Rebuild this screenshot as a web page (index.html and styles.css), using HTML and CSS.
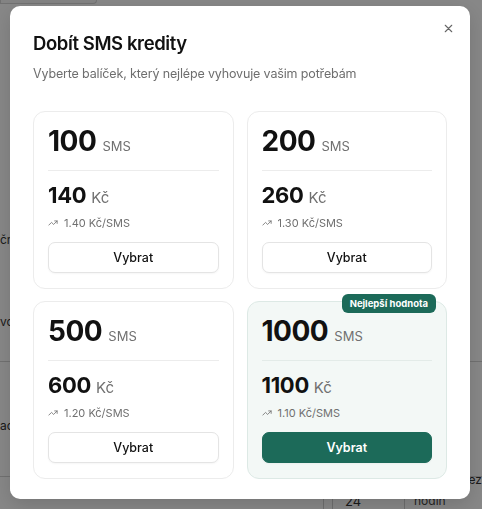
FILE: index.html
```html
<!DOCTYPE html>
<html lang="cs">
<head>
    <meta charset="UTF-8">
    <meta name="viewport" content="width=device-width, initial-scale=1.0">
    <title>Dobít SMS kredity</title>
    <link rel="stylesheet" href="styles.css">
</head>
<body>
    <!-- page behind the dialog -->
    <div class="page">
        <div class="page-top"></div>
        <div class="frag f1">čr</div>
        <div class="frag f2">vc</div>
        <div class="band">
            <div class="frag">ac</div>
            <div class="frag side">ez</div>
        </div>
        <div class="page-table">
            <div class="cell c1"></div>
            <div class="cell c2">24</div>
            <div class="cell c3">hodin</div>
        </div>
    </div>

    <div class="backdrop">
        <div class="modal">
            <button class="close" aria-label="Zavřít">
                <svg viewBox="0 0 24 24" width="13" height="13" fill="none" stroke="currentColor" stroke-width="2" stroke-linecap="round"><path d="M18 6 6 18M6 6l12 12"/></svg>
            </button>
            <h2 class="title">Dobít SMS kredity</h2>
            <p class="subtitle">Vyberte balíček, který nejlépe vyhovuje vašim potřebám</p>

            <div class="packages">
                <div class="pack">
                    <div class="amount">100 <span>SMS</span></div>
                    <div class="price">140 <span>Kč</span></div>
                    <div class="rate">
                        <svg viewBox="0 0 24 24" width="10" height="10" fill="none" stroke="currentColor" stroke-width="2" stroke-linecap="round" stroke-linejoin="round"><polyline points="22 7 13.5 15.5 8.5 10.5 2 17"/><polyline points="16 7 22 7 22 13"/></svg>
                        1.40 Kč/SMS
                    </div>
                    <button class="pick">Vybrat</button>
                </div>
                <div class="pack">
                    <div class="amount">200 <span>SMS</span></div>
                    <div class="price">260 <span>Kč</span></div>
                    <div class="rate">
                        <svg viewBox="0 0 24 24" width="10" height="10" fill="none" stroke="currentColor" stroke-width="2" stroke-linecap="round" stroke-linejoin="round"><polyline points="22 7 13.5 15.5 8.5 10.5 2 17"/><polyline points="16 7 22 7 22 13"/></svg>
                        1.30 Kč/SMS
                    </div>
                    <button class="pick">Vybrat</button>
                </div>
                <div class="pack">
                    <div class="amount">500 <span>SMS</span></div>
                    <div class="price">600 <span>Kč</span></div>
                    <div class="rate">
                        <svg viewBox="0 0 24 24" width="10" height="10" fill="none" stroke="currentColor" stroke-width="2" stroke-linecap="round" stroke-linejoin="round"><polyline points="22 7 13.5 15.5 8.5 10.5 2 17"/><polyline points="16 7 22 7 22 13"/></svg>
                        1.20 Kč/SMS
                    </div>
                    <button class="pick">Vybrat</button>
                </div>
                <div class="pack best">
                    <div class="badge">Nejlepší hodnota</div>
                    <div class="amount">1000 <span>SMS</span></div>
                    <div class="price">1100 <span>Kč</span></div>
                    <div class="rate">
                        <svg viewBox="0 0 24 24" width="10" height="10" fill="none" stroke="currentColor" stroke-width="2" stroke-linecap="round" stroke-linejoin="round"><polyline points="22 7 13.5 15.5 8.5 10.5 2 17"/><polyline points="16 7 22 7 22 13"/></svg>
                        1.10 Kč/SMS
                    </div>
                    <button class="pick primary">Vybrat</button>
                </div>
            </div>
        </div>
    </div>
</body>
</html>
```

FILE: styles.css
```css
*{
    margin: 0;
    padding: 0;
    box-sizing: border-box;
}

body{
    width: 482px;
    height: 509px;
    overflow: hidden;
    background: #fff;
    font-family: Inter, "Noto Sans", sans-serif;
    color: #111;
}

/* page behind the dialog */
.page{
    height: 100%;
    overflow: hidden;
}

.page-top{
    width: 97px;
    height: 4px;
    border: 1px solid #d6d6d6;
    border-top: none;
    border-radius: 0 0 4px 0;
    background: #f7f7f7;
}

.frag{
    font-size: 12px;
    line-height: 14px;
    color: #333;
}

.f1{ margin-top: 229px; }
.f2{ margin-top: 68px; }

.band{
    margin-top: 32px;
    height: 116px;
    border-top: 1px solid #d4d4d4;
    border-bottom: 1px solid #d4d4d4;
    display: flex;
    justify-content: space-between;
    padding-top: 57px;
}

.band .side{
    padding-top: 54px;
}

.page-table{
    display: flex;
    margin-left: 323px;
    color: #444;
}

.cell{ height: 32px; }
.c1{ width: 10px; border-left: 1px solid #cfcfcf; border-right: 1px solid #cfcfcf; }
.c2{ width: 71px; padding: 18px 0 0 12px; font-size: 13px; line-height: 12px; color: #333; }
.c3{ border-left: 1px solid #cfcfcf; padding: 18px 0 0 9px; font-size: 12px; line-height: 12px; }

/* dialog */
.backdrop{
    position: fixed;
    inset: 0;
    background: rgba(0, 0, 0, 0.47);
    display: flex;
    align-items: flex-start;
    padding: 6px 0 0 10px;
}

.modal{
    position: relative;
    width: 460px;
    height: 493px;
    background: #fff;
    border-radius: 10px;
    padding: 25px 23px 0;
    box-shadow: 0 6px 20px rgba(0, 0, 0, 0.15);
}

.close{
    position: absolute;
    top: 12px;
    right: 12px;
    width: 20px;
    height: 20px;
    border: none;
    background: transparent;
    color: #666;
    display: flex;
    align-items: center;
    justify-content: center;
}

.title{
    font-size: 18.5px;
    font-weight: 600;
    line-height: 24px;
    letter-spacing: -0.4px;
}

.subtitle{
    margin-top: 11px;
    font-size: 12.5px;
    line-height: 16px;
    letter-spacing: -0.15px;
    color: #6e6e6e;
}

.packages{
    margin-top: 29px;
    display: grid;
    grid-template-columns: 1fr 1fr;
    gap: 12px 13px;
}

.pack{
    position: relative;
    height: 178px;
    border: 1px solid #ececec;
    border-radius: 12px;
    padding: 12px 14px 14px;
    display: flex;
    flex-direction: column;
}

.amount{
    font-size: 28px;
    font-weight: 700;
    line-height: 34px;
    letter-spacing: -0.5px;
    padding-bottom: 12px;
    border-bottom: 1px solid #ececec;
}

.amount span,
.price span{
    font-weight: 400;
    color: #707070;
    letter-spacing: 0;
    line-height: 1;
}

.amount span{ font-size: 13px; }
.price span{ font-size: 15px; }

.price{
    margin-top: 11px;
    font-size: 22px;
    font-weight: 700;
    line-height: 27px;
    letter-spacing: -0.3px;
}

.rate{
    margin-top: 7px;
    display: flex;
    align-items: center;
    gap: 6px;
    font-size: 11px;
    line-height: 14px;
    color: #707070;
}

.pick{
    flex-shrink: 0;
    margin-top: 12px;
    height: 31px;
    border: 1px solid #e4e4e4;
    border-radius: 7px;
    background: #fff;
    font-family: inherit;
    font-size: 12.5px;
    font-weight: 500;
    color: #111;
    box-shadow: 0 1px 2px rgba(0, 0, 0, 0.04);
}

.best{
    background: #f3f8f6;
    border-color: #dde9e5;
}

.best .amount{
    border-bottom-color: #e3ebe8;
}

.primary{
    background: #1c6a59;
    border-color: #1c6a59;
    color: #fff;
    font-weight: 600;
}

.badge{
    position: absolute;
    top: -8px;
    right: 10px;
    height: 19px;
    padding: 0 8px;
    border-radius: 6px;
    background: #1c6a59;
    color: #fff;
    font-size: 9.5px;
    font-weight: 700;
    line-height: 19px;
}
```
